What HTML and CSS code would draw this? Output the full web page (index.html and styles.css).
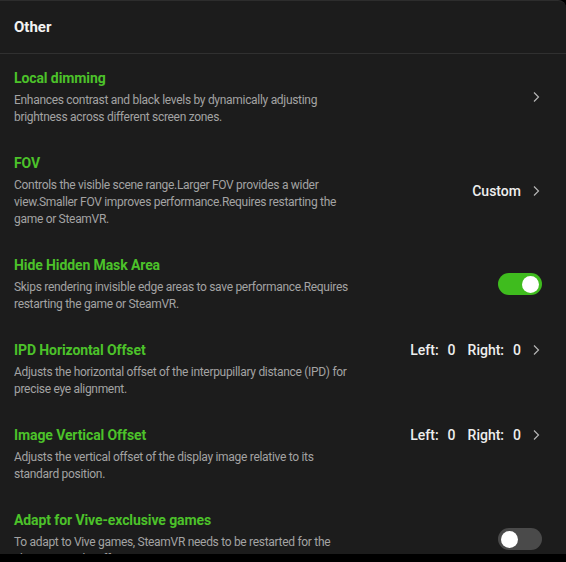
FILE: index.html
```html
<!DOCTYPE html>
<html lang="en">
<head>
    <meta charset="UTF-8">
    <meta name="viewport" content="width=device-width, initial-scale=1.0">
    <title>Other</title>
    <link rel="stylesheet" href="styles.css">
</head>
<body>
    <div class="panel">
        <div class="panel-header">Other</div>
        <div class="list">
            <div class="row">
                <div class="info">
                    <div class="title">Local dimming</div>
                    <div class="desc">Enhances contrast and black levels by dynamically adjusting brightness across different screen zones.</div>
                </div>
                <div class="action">
                    <svg class="chevron" viewBox="0 0 16 16"><path d="M6 3.5 L10.5 8 L6 12.5"/></svg>
                </div>
            </div>
            <div class="row">
                <div class="info">
                    <div class="title">FOV</div>
                    <div class="desc">Controls the visible scene range.Larger FOV provides a wider view.Smaller FOV improves performance.Requires restarting the game or SteamVR.</div>
                </div>
                <div class="action">
                    <span class="value">Custom</span>
                    <svg class="chevron" viewBox="0 0 16 16"><path d="M6 3.5 L10.5 8 L6 12.5"/></svg>
                </div>
            </div>
            <div class="row">
                <div class="info">
                    <div class="title">Hide Hidden Mask Area</div>
                    <div class="desc">Skips rendering invisible edge areas to save performance.Requires restarting the game or SteamVR.</div>
                </div>
                <div class="action">
                    <span class="switch on"><span class="knob"></span></span>
                </div>
            </div>
            <div class="row">
                <div class="info">
                    <div class="title">IPD Horizontal Offset</div>
                    <div class="desc">Adjusts the horizontal offset of the interpupillary distance (IPD) for precise eye alignment.</div>
                </div>
                <div class="action top">
                    <span class="value">Left:<span class="num">0</span></span>
                    <span class="value">Right:<span class="num">0</span></span>
                    <svg class="chevron" viewBox="0 0 16 16"><path d="M6 3.5 L10.5 8 L6 12.5"/></svg>
                </div>
            </div>
            <div class="row">
                <div class="info">
                    <div class="title">Image Vertical Offset</div>
                    <div class="desc">Adjusts the vertical offset of the display image relative to its standard position.</div>
                </div>
                <div class="action top">
                    <span class="value">Left:<span class="num">0</span></span>
                    <span class="value">Right:<span class="num">0</span></span>
                    <svg class="chevron" viewBox="0 0 16 16"><path d="M6 3.5 L10.5 8 L6 12.5"/></svg>
                </div>
            </div>
            <div class="row">
                <div class="info">
                    <div class="title">Adapt for Vive-exclusive games</div>
                    <div class="desc">To adapt to Vive games, SteamVR needs to be restarted for the changes to take effect.</div>
                </div>
                <div class="action">
                    <span class="switch"><span class="knob"></span></span>
                </div>
            </div>
        </div>
    </div>
</body>
</html>
```

FILE: styles.css
```css
body {
    margin: 0;
    background: #000;
    font-family: Roboto, "Noto Sans", sans-serif;
}
.panel {
    height: 553px;
    overflow: hidden;
    background: #1c1c1c;
    border-top: 1px solid #2d2d2d;
    border-top-right-radius: 8px;
}
.panel-header {
    height: 52px;
    line-height: 52px;
    padding-left: 14px;
    color: #f2f2f2;
    font-size: 15px;
    font-weight: 700;
    border-bottom: 1px solid #303030;
}
.list {
    padding-top: 14px;
}
.row {
    display: flex;
    align-items: center;
    justify-content: space-between;
    padding: 0 24px 0 14px;
    margin-bottom: 27px;
}
.info {
    width: 342px;
}
.title {
    color: #4cc22a;
    font-size: 14px;
    font-weight: 700;
    line-height: 20px;
    letter-spacing: -0.1px;
}
.desc {
    margin-top: 4px;
    color: #a3a3a3;
    font-size: 12px;
    line-height: 17px;
    letter-spacing: -0.3px;
}
.action {
    display: flex;
    align-items: center;
    gap: 7px;
}
.action.top {
    align-self: flex-start;
}
.value {
    color: #eeeeee;
    font-size: 14px;
    font-weight: 500;
    line-height: 20px;
}
.value + .value {
    margin-left: 5px;
}
.value .num {
    margin-left: 9px;
}
.chevron {
    width: 16px;
    height: 16px;
    margin-right: -2px;
    fill: none;
    stroke: #b5b5b5;
    stroke-width: 1.2;
}
.switch {
    display: flex;
    align-items: center;
    width: 44px;
    height: 22px;
    padding: 0 3px;
    box-sizing: border-box;
    border-radius: 11px;
    background: #4a4a4a;
}
.switch.on {
    background: #3fbc1e;
    justify-content: flex-end;
}
.knob {
    width: 17px;
    height: 17px;
    border-radius: 50%;
    background: #fff;
}
```
